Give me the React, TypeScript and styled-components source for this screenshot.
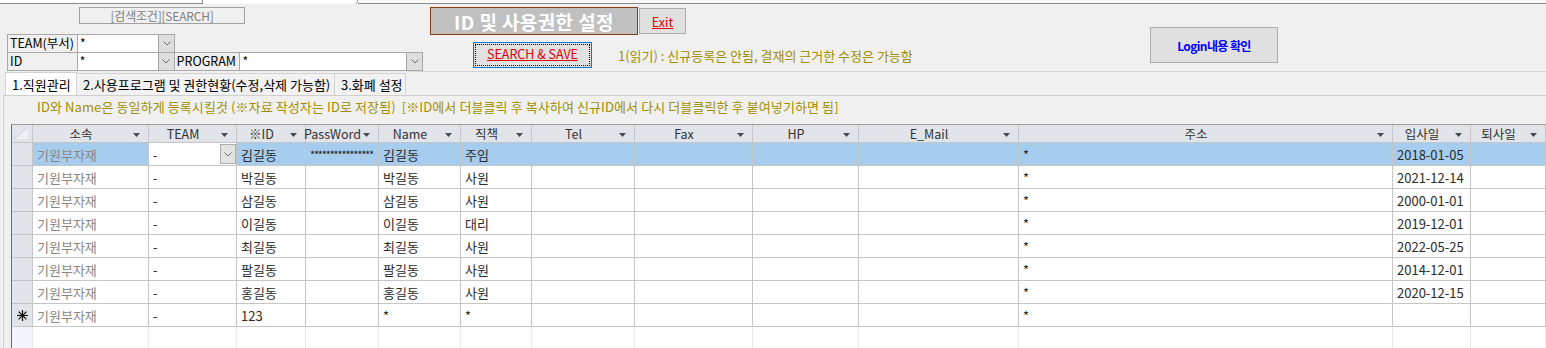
import React from 'react';
import styled, { createGlobalStyle } from 'styled-components';

const GlobalStyle = createGlobalStyle`
  html, body { margin: 0; padding: 0; background: #f0f0f0; overflow: hidden; }
  body { font-family: "Noto Sans CJK KR", "Noto Sans", sans-serif; font-size: 12px; color: #222; }
  #root { width: 1546px; height: 348px; overflow: hidden; }
`;

const OLIVE = '#a08f00';
const COLS = '21px 116px 88px 69px 73px 82px 71px 103px 118px 106px 160px 374px 78px 75px';

const Page = styled.div`
  width: 1546px;
  height: 348px;
  overflow: hidden;
  display: flex;
  flex-direction: column;
`;

/* ---------- top strip ---------- */
const TopStrip = styled.div`
  display: flex;
  height: 4px;
  flex: none;
`;
const StripBox = styled.div`
  width: 203px;
  box-sizing: border-box;
  background: #fff;
  border-right: 1px solid #8a8a8a;
  border-bottom: 1px solid #8a8a8a;
`;
const StripTab = styled.div`
  width: 155px;
  box-sizing: border-box;
  background: #fff;
  border-right: 1px solid #8a8a8a;
  border-bottom-right-radius: 4px;
`;
const StripRest = styled.div`
  flex: 1;
  background: #fafafa;
  border-bottom: 1px solid #8a8a8a;
`;

/* ---------- top area ---------- */
const TopArea = styled.div`
  display: flex;
  height: 67px;
  flex: none;
`;
const LeftCol = styled.div`
  width: 423px;
  padding-left: 7px;
  box-sizing: border-box;
  display: flex;
  flex-direction: column;
`;
const SearchCaption = styled.div`
  margin: 3px 0 0 72px;
  width: 166px;
  height: 17px;
  box-sizing: border-box;
  border: 1px solid #a0a0a0;
  color: #808080;
  font-size: 12px;
  line-height: 15px;
  text-align: center;
  letter-spacing: -0.2px;
`;
const FormRows = styled.div`
  margin-top: 10px;
  display: flex;
  flex-direction: column;
`;
const FormRow = styled.div`
  display: flex;
  height: 19px;
  & + & { margin-top: -1px; }
`;
const FieldLabel = styled.div<{ $w: number; $joined?: boolean }>`
  width: ${p => p.$w}px;
  height: 19px;
  box-sizing: border-box;
  border: 1px solid #a8a8a8;
  background: #f0f0f0;
  padding-left: 2px;
  margin-left: ${p => (p.$joined ? -1 : 0)}px;
  font-size: 12.5px;
  line-height: 16px;
  color: #000;
  white-space: nowrap;
`;
const FieldInput = styled.div<{ $w: number }>`
  width: ${p => p.$w}px;
  height: 19px;
  box-sizing: border-box;
  border: 1px solid #a8a8a8;
  background: #fff;
  padding-left: 2px;
  font-size: 12px;
  line-height: 16px;
  color: #000;
  margin-left: -1px;
`;
const ComboBtn = styled.div`
  width: 17px;
  height: 19px;
  box-sizing: border-box;
  border: 1px solid #a8a8a8;
  background: #dedede;
  margin-left: -1px;
  display: flex;
  align-items: center;
  justify-content: center;
`;

const MiddleCol = styled.div`
  margin-left: 7px;
  display: flex;
  flex-direction: column;
`;
const TitleRow = styled.div`
  display: flex;
  align-items: flex-start;
  margin-top: 3px;
`;
const TitleBox = styled.div`
  width: 208px;
  height: 28px;
  box-sizing: border-box;
  background: #c0c0c0;
  border: 1px solid #8e3c12;
  color: #fff;
  font-size: 19px;
  font-weight: 700;
  letter-spacing: 0.4px;
  display: flex;
  align-items: center;
  justify-content: center;
  white-space: nowrap;
`;
const ExitBtn = styled.div`
  width: 47px;
  height: 26px;
  margin: 1px 0 0 1px;
  box-sizing: border-box;
  background: #e0e0e0;
  border: 1px solid #adadad;
  color: #e00000;
  text-decoration: underline;
  font-size: 12.5px;
  display: flex;
  align-items: center;
  justify-content: center;
`;
const ActionRow = styled.div`
  display: flex;
  align-items: center;
  margin-top: 7px;
`;
const SearchSave = styled.div`
  margin-left: 43px;
  width: 119px;
  height: 26px;
  box-sizing: border-box;
  border: 1px solid #0078d7;
  background: #e1e1e1;
  padding: 1px;
  display: flex;
`;
const FocusRect = styled.div`
  flex: 1;
  border: 1px dotted #000;
  color: #e00000;
  text-decoration: underline;
  font-size: 12.5px;
  padding-bottom: 3px;
  display: flex;
  align-items: center;
  justify-content: center;
  white-space: nowrap;
`;
const TopNotice = styled.div`
  margin-left: 26px;
  color: ${OLIVE};
  font-size: 13px;
  white-space: nowrap;
`;
const LoginBtn = styled.div`
  margin: 23px 268px 0 auto;
  width: 128px;
  height: 36px;
  box-sizing: border-box;
  background: #e0e0e0;
  border: 1px solid #adadad;
  color: #0000ff;
  font-weight: 700;
  font-size: 12px;
  letter-spacing: -0.6px;
  display: flex;
  align-items: center;
  justify-content: center;
`;

/* ---------- tabs ---------- */
const TabStrip = styled.div`
  display: flex;
  align-items: flex-end;
  height: 24px;
  padding-left: 5px;
  flex: none;
`;
const Tab = styled.div<{ $w: number; $active?: boolean }>`
  width: ${p => p.$w}px;
  height: ${p => (p.$active ? 23 : 22)}px;
  box-sizing: border-box;
  border: 1px solid #d2d2d2;
  border-bottom: none;
  background: ${p => (p.$active ? '#fff' : '#f2f2f2')};
  padding-left: 6px;
  font-size: 13px;
  color: #000;
  display: flex;
  align-items: center;
  white-space: nowrap;
  & + & { margin-left: -1px; }
`;
const TabFiller = styled.div`
  flex: 1;
  align-self: flex-start;
  margin-left: 3px;
  border-top: 1px solid #d6d6d6;
`;
const Panel = styled.div`
  flex: 1;
  margin-left: 3px;
  border-left: 1px solid #cfcfcf;
  border-top: 1px solid #cfcfcf;
  display: flex;
  flex-direction: column;
  min-height: 0;
`;
const PanelNotice = styled.div`
  height: 28px;
  flex: none;
  padding-left: 33px;
  line-height: 22px;
  color: ${OLIVE};
  font-size: 13px;
  letter-spacing: 0.1px;
  white-space: nowrap;
`;

/* ---------- datasheet ---------- */
const Sheet = styled.div`
  margin-left: 7px;
  border-left: 1px solid #6d6d6d;
  border-top: 1px solid #9c9c9c;
  display: flex;
  flex-direction: column;
`;
const Row = styled.div<{ $h: number }>`
  display: grid;
  grid-template-columns: ${COLS};
  height: ${p => p.$h}px;
`;
const HeadCell = styled.div`
  box-sizing: border-box;
  background: #e1e4e8;
  border-right: 1px solid #c4c6c9;
  border-bottom: 1px solid #c4c6c9;
  display: flex;
  align-items: center;
  color: #333;
  font-size: 12.5px;
  white-space: nowrap;
  min-width: 0;
`;
const HeadLabel = styled.span`
  flex: 1;
  display: flex;
  justify-content: center;
  min-width: 0;
  line-height: 16px;
`;
const HeadArrow = styled.span`
  width: 14px;
  margin-right: 5px;
  flex: none;
  display: flex;
  justify-content: center;
  align-items: center;
  padding-top: 2px;
`;
const CornerCell = styled.div`
  box-sizing: border-box;
  background: #e1e4e8;
  border-right: 1px solid #c4c6c9;
  border-bottom: 1px solid #c4c6c9;
  display: flex;
  align-items: flex-start;
  padding: 2px 0 0 2px;
`;
const Selector = styled.div<{ $empty?: boolean }>`
  box-sizing: border-box;
  background: ${p => (p.$empty ? '#f3f5fb' : '#e1e4e8')};
  border-right: 1px solid ${p => (p.$empty ? '#e6e8ee' : '#c4c6c9')};
  border-bottom: ${p => (p.$empty ? 'none' : '1px solid #c4c6c9')};
  display: flex;
  align-items: center;
  justify-content: center;
`;
const Cell = styled.div<{ $sel?: boolean; $muted?: boolean; $white?: boolean; $empty?: boolean }>`
  box-sizing: border-box;
  background: ${p => (p.$white ? '#fff' : p.$sel ? '#a6cdee' : '#fff')};
  border-right: 1px solid ${p => (p.$empty ? '#ececec' : '#c6c6c6')};
  border-bottom: ${p => (p.$empty ? 'none' : '1px solid #c6c6c6')};
  padding-left: 4px;
  display: flex;
  align-items: center;
  overflow: hidden;
  white-space: nowrap;
  font-size: 13px;
  color: ${p => (p.$muted ? '#8a8580' : '#2a2a2a')};
  min-width: 0;
`;
const Stars = styled.span`
  font-size: 11px;
  letter-spacing: -1.2px;
  color: #222;
`;
const CellCombo = styled.div`
  margin-left: auto;
  width: 16px;
  height: 20px;
  box-sizing: border-box;
  border: 1px solid #adadad;
  background: #e3e3e3;
  display: flex;
  align-items: center;
  justify-content: center;
`;

const Chevron = () => (
  <svg width="8" height="5" viewBox="0 0 8 5">
    <polyline points="0.5,0.5 4,4 7.5,0.5" fill="none" stroke="#6a6a6a" strokeWidth="1" />
  </svg>
);
const DownTri = () => (
  <svg width="7" height="4" viewBox="0 0 7 4">
    <polygon points="0,0 7,0 3.5,4" fill="#4a4a4a" />
  </svg>
);
const NewStar = () => (
  <svg width="11" height="11" viewBox="0 0 11 11">
    <g stroke="#111" strokeWidth="1.2" strokeLinecap="square">
      <line x1="5.5" y1="0.5" x2="5.5" y2="10.5" />
      <line x1="0.5" y1="5.5" x2="10.5" y2="5.5" />
      <line x1="2" y1="2" x2="9" y2="9" />
      <line x1="9" y1="2" x2="2" y2="9" />
    </g>
  </svg>
);
const CornerMark = () => (
  <svg width="14" height="12" viewBox="0 0 14 12">
    <polygon points="0,12 14,0 14,12" fill="#eef0f3" />
    <line x1="0" y1="12" x2="14" y2="0" stroke="#c9ccd1" strokeWidth="1" />
  </svg>
);

const HEADERS = ['소속', 'TEAM', '※ID', 'PassWord', 'Name', '직책', 'Tel', 'Fax', 'HP', 'E_Mail', '주소', '입사일', '퇴사일'];

type Rec = { id: string; name: string; title: string; date: string; sel?: boolean };
const RECORDS: Rec[] = [
  { id: '김길동', name: '김길동', title: '주임', date: '2018-01-05', sel: true },
  { id: '박길동', name: '박길동', title: '사원', date: '2021-12-14' },
  { id: '삼길동', name: '삼길동', title: '사원', date: '2000-01-01' },
  { id: '이길동', name: '이길동', title: '대리', date: '2019-12-01' },
  { id: '최길동', name: '최길동', title: '사원', date: '2022-05-25' },
  { id: '팔길동', name: '팔길동', title: '사원', date: '2014-12-01' },
  { id: '홍길동', name: '홍길동', title: '사원', date: '2020-12-15' },
];

export default function App() {
  return (
    <Page>
      <GlobalStyle />
      <TopStrip>
        <StripBox />
        <StripTab />
        <StripRest />
      </TopStrip>

      <TopArea>
        <LeftCol>
          <SearchCaption>[검색조건][SEARCH]</SearchCaption>
          <FormRows>
            <FormRow>
              <FieldLabel $w={71}>TEAM(부서)</FieldLabel>
              <FieldInput $w={82}>*</FieldInput>
              <ComboBtn><Chevron /></ComboBtn>
            </FormRow>
            <FormRow>
              <FieldLabel $w={71}>ID</FieldLabel>
              <FieldInput $w={82}>*</FieldInput>
              <ComboBtn><Chevron /></ComboBtn>
              <FieldLabel $w={67} $joined>PROGRAM</FieldLabel>
              <FieldInput $w={168}>*</FieldInput>
              <ComboBtn><Chevron /></ComboBtn>
            </FormRow>
          </FormRows>
        </LeftCol>

        <MiddleCol>
          <TitleRow>
            <TitleBox>ID 및 사용권한 설정</TitleBox>
            <ExitBtn>Exit</ExitBtn>
          </TitleRow>
          <ActionRow>
            <SearchSave>
              <FocusRect>SEARCH &amp; SAVE</FocusRect>
            </SearchSave>
            <TopNotice>1(읽기) : 신규등록은 안됨, 결재의 근거한 수정은 가능함</TopNotice>
          </ActionRow>
        </MiddleCol>

        <LoginBtn>Login내용 확인</LoginBtn>
      </TopArea>

      <TabStrip>
        <Tab $w={72} $active>1.직원관리</Tab>
        <Tab $w={259}>2.사용프로그램 및 권한현황(수정,삭제 가능함)</Tab>
        <Tab $w={72}>3.화폐 설정</Tab>
        <TabFiller />
      </TabStrip>

      <Panel>
        <PanelNotice>
          ID와 Name은 동일하게 등록시킬것 (※자료 작성자는 ID로 저장됨)&nbsp;&nbsp;[※ID에서 더블클릭 후 복사하여 신규ID에서 다시 더블클릭한 후 붙여넣기하면 됨]
        </PanelNotice>

        <Sheet>
          <Row $h={18}>
            <CornerCell><CornerMark /></CornerCell>
            {HEADERS.map(h => (
              <HeadCell key={h}>
                <HeadLabel>{h}</HeadLabel>
                <HeadArrow><DownTri /></HeadArrow>
              </HeadCell>
            ))}
          </Row>

          {RECORDS.map(r => (
            <Row $h={23} key={r.id}>
              <Selector />
              <Cell $sel={r.sel} $muted>기원부자재</Cell>
              {r.sel ? (
                <Cell $white>
                  -
                  <CellCombo><Chevron /></CellCombo>
                </Cell>
              ) : (
                <Cell>-</Cell>
              )}
              <Cell $sel={r.sel}>{r.id}</Cell>
              <Cell $sel={r.sel}>{r.sel ? <Stars>****************</Stars> : null}</Cell>
              <Cell $sel={r.sel}>{r.name}</Cell>
              <Cell $sel={r.sel}>{r.title}</Cell>
              <Cell $sel={r.sel} />
              <Cell $sel={r.sel} />
              <Cell $sel={r.sel} />
              <Cell $sel={r.sel} />
              <Cell $sel={r.sel}>*</Cell>
              <Cell $sel={r.sel}>{r.date}</Cell>
              <Cell $sel={r.sel} />
            </Row>
          ))}

          <Row $h={23}>
            <Selector><NewStar /></Selector>
            <Cell $muted>기원부자재</Cell>
            <Cell>-</Cell>
            <Cell>123</Cell>
            <Cell />
            <Cell>*</Cell>
            <Cell>*</Cell>
            <Cell />
            <Cell />
            <Cell />
            <Cell />
            <Cell>*</Cell>
            <Cell />
            <Cell />
          </Row>

          <Row $h={30}>
            <Selector $empty />
            {HEADERS.map(h => (
              <Cell key={h} $empty />
            ))}
          </Row>
        </Sheet>
      </Panel>
    </Page>
  );
}
